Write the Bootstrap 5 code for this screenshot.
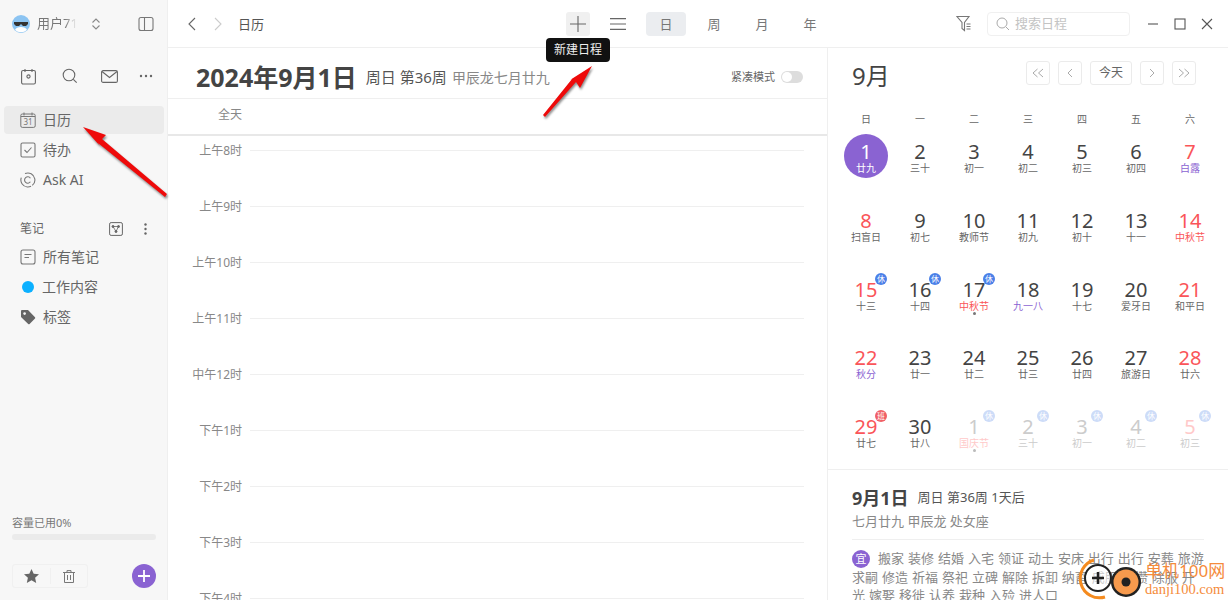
<!DOCTYPE html>
<html lang="zh-CN">
<head>
    <meta charset="UTF-8">
    <meta name="viewport" content="width=device-width, initial-scale=1.0">
    <title>日历</title>
    <link rel="stylesheet" href="https://cdn.jsdelivr.net/npm/bootstrap@5.3.0/dist/css/bootstrap.min.css">
    <style>
        html, body { height: 600px; overflow: hidden; }
        body { font-family: "Noto Sans", "Noto Sans CJK SC", sans-serif; color: #555; background: #fff; font-size: 13px; }
        svg { display: block; flex: none; }
        .shell { width: 1228px; height: 600px; position: relative; overflow: hidden; }

        /* sidebar */
        .side { width: 168px; flex: none; background: #f7f7f7; border-right: 1px solid #efefef; height: 600px; }
        .side-head { height: 47px; padding: 0 13px 0 12px; }
        .user-name { width: 40px; margin-left: 7px; white-space: nowrap; overflow: hidden; color: #777; font-size: 13px; -webkit-mask-image: linear-gradient(90deg, #000 70%, transparent); mask-image: linear-gradient(90deg, #000 70%, transparent); }
        .user-switch { margin-left: 13px; }
        .side-tools { height: 58px; padding-left: 21px; margin-bottom: 1px; }
        .side-tools svg:nth-child(2) { margin-left: 26px; }
        .side-tools svg:nth-child(3) { margin-left: 23px; }
        .side-tools svg:nth-child(4) { margin-left: 21px; }
        .side-item { height: 28px; margin: 0 3px 2px 4px; padding: 0 16px; border-radius: 4px; gap: 7px; font-size: 14px; color: #666; }
        .side-item span:not(.dot-blue) { margin-top: -2px; }
        .side-item.active { background: #ebebeb; }
        .side-label { height: 20px; margin: 23px 0 4px; padding: 0 20px 0 20px; font-size: 12px; color: #666; }
        .label-tools { gap: 21px; }
        .dot-blue { width: 12px; height: 12px; margin: 0 1px 0 2px; border-radius: 50%; background: #0bb0ff; flex: none; }
        .side-foot { padding: 0 11px 12px 12px; margin-top: auto; }
        .cap-text { font-size: 11px; color: #777; line-height: 16px; margin-bottom: 3px; }
        .cap-bar { height: 6px; border-radius: 3px; background: #ebebeb; margin-bottom: 24px; }
        .fav-box { width: 76px; height: 24px; border: 1px solid #f0f0f0; border-radius: 3px; }
        .fav-box > div { width: 37px; }
        .fav-box > div + div { border-left: 1px solid #f0f0f0; height: 16px; }
        .add-round { width: 24px; height: 24px; border-radius: 50%; background: #8a63d2; }

        /* top bar */
        .topbar { height: 48px; border-bottom: 1px solid #efefef; }
        .crumb { width: 398px; padding-left: 19px; font-size: 13px; color: #555; }
        .crumb span { margin-left: 15px; margin-top: 2px; }
        .crumb svg + svg { margin-left: 16px; }
        .plus-btn { width: 24px; height: 24px; border-radius: 3px; background: #f0f0f0; }
        .list-btn { width: 24px; height: 24px; margin: 0 16px 0 16px; }
        .view-tab { width: 40px; height: 24px; border-radius: 4px; margin-right: 8px; font-size: 13px; color: #777; text-align: center; line-height: 24px; }
        .view-tab.active { background: #ebedf0; }
        .search-box { width: 143px; height: 24px; border: 1px solid #f0f0f0; border-radius: 4px; padding-left: 8px; gap: 5px; color: #c4c4c4; font-size: 13px; margin: 0 16px 0 14px; }
        .win-btns { gap: 13px; padding-right: 14px; }

        /* day column */
        .day-col { width: 660px; flex: none; border-right: 1px solid #efefef; height: 552px; overflow: hidden; }
        .day-head { height: 51px; padding: 8px 24px 0 28px; border-bottom: 1px solid #efefef; }
        .day-title { font-size: 25px; font-weight: 700; color: #444; line-height: 32px; margin-right: 9px; }
        .day-sub { font-size: 15px; color: #555; margin-right: 5px; }
        .day-lunar { font-size: 14px; color: #888; }
        .compact { font-size: 11px; color: #666; gap: 6px; }
        .mini-switch { width: 22px; height: 12px; border-radius: 6px; background: #ddd; position: relative; }
        .mini-switch::after { content: ""; position: absolute; left: 1px; top: 1px; width: 10px; height: 10px; border-radius: 50%; background: #fff; }
        .all-day { height: 37px; border-bottom: 2px solid #e8e8e8; padding-right: 24px; color: #888; font-size: 12px; }
        .all-day span { width: 74px; text-align: right; margin-top: -4px; }
        .hour-list { padding-top: 7px; }
        .hour-row { height: 56px; gap: 8px; padding-right: 23px; align-items: flex-start; color: #888; font-size: 12px; line-height: 16px; }
        .hour-row span { width: 74px; text-align: right; flex: none; }
        .hour-row i { flex: 1; height: 1px; background: #efefef; margin-top: 7px; }

        /* right month panel */
        .month-col { width: 400px; flex: none; height: 552px; overflow: hidden; }
        .month-head { height: 57px; padding: 0 32px 0 24px; }
        .month-name { font-size: 24px; color: #444; line-height: 32px; margin-bottom: 2px; }
        .pager { height: 24px; min-width: 24px; border: 1px solid #ebebeb; border-radius: 3px; background: #fff; padding: 0; margin: 0 0 8px 8px; color: #666; font-size: 12px; line-height: 22px; }
        .pager.today { width: 42px; }
        .week-row, .date-grid { display: grid; grid-template-columns: repeat(7, 54px); padding-left: 11px; }
        .week-row { height: 22px; font-size: 10px; color: #666; text-align: center; line-height: 28px; }
        .date-grid { grid-auto-rows: 68.75px; height: 335px; margin-top: 7px; }
        .cell { position: relative; text-align: center; padding-top: 7px; margin: 0 5px; height: 44px; }
        .cell b { display: block; font-weight: 400; font-size: 20px; line-height: 21px; color: #444; }
        .cell small { display: block; font-size: 10px; line-height: 12px; color: #666; white-space: nowrap; }
        .cell.red b { color: #fa5559; }
        .cell.today-on { background: #8a63d2; border-radius: 50%; }
        .cell.today-on b, .cell.today-on small { color: #fff; }
        small.t-red { color: #fa5559 !important; }
        small.t-purple { color: #8a63d2 !important; }
        .cell.dim b, .cell.dim small { color: #ccc; }
        .cell.dim.red b { color: #ffc9c9; }
        .cell.dim small.t-red { color: #ffc9c9 !important; }
        .rest-tag { position: absolute; right: 1px; top: 1px; width: 12px; height: 12px; border-radius: 50%; background: #4a80e8; color: #fff; font-size: 8px; line-height: 12px; text-align: center; font-style: normal; }
        .rest-tag.work { background: #f06066; }
        .cell.dim .rest-tag { background: #cddcf8; }
        .event-dot { position: absolute; left: 20.5px; top: 40px; width: 3px; height: 3px; border-radius: 50%; background: #777; }
        .cell.dim .event-dot { background: #bbb; }
        .detail { border-top: 1px solid #efefef; padding: 16px 24px 0; height: 131px; }
        .detail-date { font-size: 18px; font-weight: 700; color: #444; line-height: 24px; margin-right: 9px; }
        .detail-sub { font-size: 13px; color: #555; }
        .detail-lunar { font-size: 13px; color: #888; line-height: 22px; padding-bottom: 7px; border-bottom: 1px solid #efefef; margin-bottom: 9px; }
        .yi-text { font-size: 13px; line-height: 18px; color: #888; margin: 0; word-spacing: .6px; }
        .yi-mark { display: inline-block; width: 18px; height: 18px; border-radius: 50%; background: #8a63d2; color: #fff; font-size: 11px; text-align: center; line-height: 18px; margin-right: 8px; }

        /* things laid over the page */
        .tip-new { position: absolute; left: 546px; top: 38px; width: 64px; height: 24px; border-radius: 4px; background: #111; color: #eee; font-size: 12px; text-align: center; line-height: 24px; }
        .arrows { position: absolute; left: 0; top: 0; pointer-events: none; }
        .arrows polygon { fill: #ee0a0a; filter: drop-shadow(1px 2px 1px rgba(0,0,0,.45)); }
        .mark-site { position: absolute; left: 1145px; top: 561px; color: #f58b3b; white-space: nowrap; }
        .mark-cn { font-size: 17px; line-height: 20px; }
        .mark-en { font-size: 14.5px; line-height: 17px; margin-top: 0; font-family: "Liberation Serif", serif; }
        .mark-logo { position: absolute; left: 1078px; top: 556px; }
    </style>
</head>
<body>
<div class="shell d-flex">
    <!-- Sidebar -->
    <aside class="side d-flex flex-column">
        <div class="side-head d-flex align-items-center">
            <svg width="18" height="18" viewBox="0 0 18 18"><circle cx="9" cy="9" r="9" fill="#8cc4f2"/><path d="M3 15c1-4 11-4 12 0a9 9 0 0 1-12 0z" fill="#fff"/><path d="M2 7h14v2l-2 2h-3L9 9l-2 2H4L2 9z" fill="#333"/></svg>
            <div class="user-name">用户71</div>
            <svg class="user-switch" width="12" height="16" viewBox="0 0 12 16" fill="none" stroke="#888" stroke-width="1.1"><path d="M2.500 6.500 6 3l3.500 3.500M2.500 9.500 6 13l3.500-3.500"/></svg>
            <svg class="ms-auto" width="16" height="16" viewBox="0 0 16 16" fill="none" stroke="#777" stroke-width="1.1"><rect x="1" y="1.500" width="14" height="13" rx="2"/><path d="M6.500 1.500v13"/></svg>
        </div>
        <div class="side-tools d-flex align-items-center">
            <svg width="15" height="17" viewBox="0 0 15 17" fill="none" stroke="#666" stroke-width="1.1"><rect x=".6" y="2.500" width="13.800" height="13.500" rx="1.500"/><path d="M4 1v3M11 1v3"/><circle cx="7.500" cy="8.500" r="1.600"/></svg>
            <svg width="16" height="16" viewBox="0 0 16 16" fill="none" stroke="#666" stroke-width="1.1"><circle cx="7" cy="7" r="5.800"/><path d="m11.300 11.300 3.400 3.400"/></svg>
            <svg width="17" height="13" viewBox="0 0 17 13" fill="none" stroke="#666" stroke-width="1.1"><rect x=".6" y=".6" width="15.800" height="11.800" rx="1.500"/><path d="m1 1.500 7.500 6 7.500-6"/></svg>
            <svg width="14" height="4" viewBox="0 0 14 4" fill="#666"><circle cx="2" cy="2" r="1.200"/><circle cx="7" cy="2" r="1.200"/><circle cx="12" cy="2" r="1.200"/></svg>
        </div>
        <div class="side-item active d-flex align-items-center">
            <svg width="16" height="16" viewBox="0 0 16 16" fill="none" stroke="#777" stroke-width="1"><rect x=".8" y="2" width="14.400" height="13.400" rx="1.500"/><path d="M4 .5v3M12 .5v3M1 4.500h14"/><text x="8" y="13" font-size="8" fill="#777" stroke="none" text-anchor="middle">31</text></svg>
            <span>日历</span>
        </div>
        <div class="side-item d-flex align-items-center">
            <svg width="16" height="16" viewBox="0 0 16 16" fill="none" stroke="#777" stroke-width="1.1"><rect x="1" y="1" width="14" height="14" rx="1.500"/><path d="m4.500 8 2.500 2.500 4.500-5"/></svg>
            <span>待办</span>
        </div>
        <div class="side-item d-flex align-items-center">
            <svg width="16" height="16" viewBox="0 0 16 16" fill="none" stroke="#777" stroke-width="1.1"><path d="M5 1.600a7 7 0 1 1-3.700 4" stroke-dasharray="20 1.500"/><path d="M10.400 6.200a3.200 3.200 0 1 0 0 3.600"/></svg>
            <span>Ask AI</span>
        </div>
        <div class="side-label d-flex align-items-center justify-content-between">
            <span>笔记</span>
            <span class="label-tools d-flex align-items-center">
                <svg width="14" height="14" viewBox="0 0 14 14" fill="none" stroke="#666" stroke-width="1"><rect x=".6" y=".6" width="12.800" height="12.800" rx="1.500"/><path d="m4 4.500 5.500 0L7 9.500z" stroke-width=".8"/><circle cx="4" cy="4.500" r="1" fill="#666"/><circle cx="9.500" cy="4.500" r="1" fill="#666"/><circle cx="7" cy="9.500" r="1" fill="#666"/></svg>
                <svg width="3" height="12" viewBox="0 0 3 12" fill="#666"><circle cx="1.500" cy="1.500" r="1.200"/><circle cx="1.500" cy="6" r="1.200"/><circle cx="1.500" cy="10.500" r="1.200"/></svg>
            </span>
        </div>
        <div class="side-item d-flex align-items-center">
            <svg width="16" height="16" viewBox="0 0 16 16" fill="none" stroke="#777" stroke-width="1.1"><rect x="1" y="1" width="14" height="14" rx="2"/><path d="M4.500 5.500h7M4.500 8.500h4.500"/></svg>
            <span>所有笔记</span>
        </div>
        <div class="side-item d-flex align-items-center">
            <span class="dot-blue"></span>
            <span>工作内容</span>
        </div>
        <div class="side-item d-flex align-items-center">
            <svg width="16" height="16" viewBox="0 0 16 16"><path d="M1 2.200C1 1.500 1.500 1 2.200 1H8l7 7.200a1 1 0 0 1 0 1.300l-5.400 5.400a1 1 0 0 1-1.400 0L1 8z" fill="#666"/><circle cx="4.600" cy="4.600" r="1.300" fill="#f7f7f7"/></svg>
            <span>标签</span>
        </div>
        <div class="side-foot">
            <div class="cap-text">容量已用0%</div>
            <div class="cap-bar"></div>
            <div class="d-flex align-items-center justify-content-between">
                <div class="fav-box d-flex align-items-center">
                    <div class="d-flex justify-content-center">
                        <svg width="15" height="14" viewBox="0 0 15 14" fill="#666"><path d="m7.500 0 2.200 4.700 5.300.6-3.900 3.500 1.100 5.200-4.700-2.700L2.800 14l1.100-5.200L0 5.300l5.300-.6z"/></svg>
                    </div>
                    <div class="d-flex justify-content-center align-items-center">
                        <svg width="12" height="13" viewBox="0 0 12 13" fill="none" stroke="#777"><path d="M0 2.500h12M4 2.500V.6h4v1.900M1.500 2.500v10h9v-10M4.500 5v5M7.500 5v5"/></svg>
                    </div>
                </div>
                <div class="add-round d-flex align-items-center justify-content-center">
                    <svg width="12" height="12" viewBox="0 0 12 12" stroke="#fff" stroke-width="1.800"><path d="M6 0v12M0 6h12"/></svg>
                </div>
            </div>
        </div>
    </aside>

    <div class="flex-grow-1 d-flex flex-column">
        <!-- Top bar -->
        <header class="topbar d-flex align-items-center">
            <div class="crumb d-flex align-items-center">
                <svg width="10" height="14" viewBox="0 0 10 14" fill="none" stroke="#666" stroke-width="1.1"><path d="M8 1 2 7l6 6"/></svg>
                <svg width="10" height="14" viewBox="0 0 10 14" fill="none" stroke="#ccc" stroke-width="1.1"><path d="m2 1 6 6-6 6"/></svg>
                <span>日历</span>
            </div>
            <div class="plus-btn d-flex align-items-center justify-content-center">
                <svg width="16" height="16" viewBox="0 0 16 16" stroke="#666" stroke-width="1.1"><path d="M8 0v16M0 8h16"/></svg>
            </div>
            <div class="list-btn d-flex align-items-center justify-content-center">
                <svg width="16" height="12" viewBox="0 0 16 12" stroke="#666" stroke-width="1.1"><path d="M0 .6h16M0 6h16M0 11.400h16"/></svg>
            </div>
            <div class="view-tab active">日</div>
            <div class="view-tab">周</div>
            <div class="view-tab">月</div>
            <div class="view-tab">年</div>
            <svg class="ms-auto" width="17" height="17" viewBox="0 0 17 17" fill="none" stroke="#777" stroke-width="1.1"><path d="M1 1.500h12L8.500 7.500v8L6 13.500v-6zM10.500 9h4M10.500 11.500h4M10.500 14h4"/></svg>
            <div class="search-box d-flex align-items-center">
                <svg width="14" height="14" viewBox="0 0 14 14" fill="none" stroke="#aaa"><circle cx="6" cy="6" r="5"/><path d="m10 10 3 3"/></svg>
                <span>搜索日程</span>
            </div>
            <div class="win-btns d-flex align-items-center">
                <svg width="14" height="14" viewBox="0 0 14 14" stroke="#555" stroke-width="1.1"><path d="M2 7h10"/></svg>
                <svg width="14" height="14" viewBox="0 0 14 14" fill="none" stroke="#555" stroke-width="1.1"><rect x="2" y="2" width="10" height="10"/></svg>
                <svg width="14" height="14" viewBox="0 0 14 14" stroke="#555" stroke-width="1.1"><path d="m2 2 10 10M12 2 2 12"/></svg>
            </div>
        </header>

        <div class="d-flex">
            <!-- Day view -->
            <section class="day-col">
                <div class="day-head d-flex align-items-center">
                    <span class="day-title">2024年9月1日</span>
                    <span class="day-sub">周日 第36周</span>
                    <span class="day-lunar">甲辰龙七月廿九</span>
                    <span class="compact ms-auto d-flex align-items-center">紧凑模式 <span class="mini-switch"></span></span>
                </div>
                <div class="all-day d-flex align-items-center"><span>全天</span></div>
                <div class="hour-list" id="hour-list"></div>
            </section>

            <!-- Month panel -->
            <section class="month-col">
                <div class="month-head d-flex align-items-center">
                    <span class="month-name me-auto">9月</span>
                    <button class="pager d-flex align-items-center justify-content-center"><svg width="14" height="10" viewBox="0 0 14 10" fill="none" stroke="#aaa"><path d="M6.500 1 2 5l4.500 4M12 1 7.500 5l4.500 4"/></svg></button>
                    <button class="pager d-flex align-items-center justify-content-center"><svg width="8" height="10" viewBox="0 0 8 10" fill="none" stroke="#aaa"><path d="M6 1 2 5l4 4"/></svg></button>
                    <button class="pager today">今天</button>
                    <button class="pager d-flex align-items-center justify-content-center"><svg width="8" height="10" viewBox="0 0 8 10" fill="none" stroke="#aaa"><path d="m2 1 4 4-4 4"/></svg></button>
                    <button class="pager d-flex align-items-center justify-content-center"><svg width="14" height="10" viewBox="0 0 14 10" fill="none" stroke="#aaa"><path d="M2 1l4.500 4L2 9M7.500 1 12 5l-4.500 4"/></svg></button>
                </div>
                <div class="week-row">
                    <span>日</span><span>一</span><span>二</span><span>三</span><span>四</span><span>五</span><span>六</span>
                </div>
                <div class="date-grid" id="date-grid"></div>
                <div class="detail">
                    <div class="d-flex align-items-center">
                        <span class="detail-date">9月1日</span>
                        <span class="detail-sub">周日 第36周 1天后</span>
                    </div>
                    <div class="detail-lunar">七月廿九 甲辰龙 处女座</div>
                    <p class="yi-text"><span class="yi-mark">宜</span>搬家 装修 结婚 入宅 领证 动土 安床 出行 出行 安葬 旅游 求嗣 修造 祈福 祭祀 立碑 解除 拆卸 纳畜 成服 启攒 除服 开光 嫁娶 移徙 认养 栽种 入殓 进人口</p>
                </div>
            </section>
        </div>
    </div>

    <!-- Tooltip -->
    <div class="tip-new">新建日程</div>

    <!-- Red annotation arrows -->
    <svg class="arrows" width="1228" height="600" viewBox="0 0 1228 600">
        <polygon points="83,127 106,135 102,139 167,194 165,197 98,143 100,146"/>
        <polygon points="592,66 580,88 576,82 545,117 543,115 572,79 570,80"/>
    </svg>

    <!-- Site watermark -->
    <svg class="mark-logo" width="66" height="44" viewBox="0 0 66 44">
        <path d="M16 4A19 19 0 0 0 27 41" fill="none" stroke="#f58b1f" stroke-width="3"/>
        <circle cx="20" cy="22" r="13" fill="#fff" fill-opacity=".6" stroke="#222" stroke-width="2"/>
        <path d="M20 16v12M14 22h12" stroke="#222" stroke-width="2.500"/>
        <circle cx="48" cy="26" r="15" fill="#222"/>
        <circle cx="48" cy="26" r="12.500" fill="#f79a4d"/>
        <circle cx="48" cy="26" r="4.500" fill="#222"/>
    </svg>
    <div class="mark-site">
        <div class="mark-cn">单机100网</div>
        <div class="mark-en">danji100.com</div>
    </div>
</div>

<script src="https://cdn.jsdelivr.net/npm/bootstrap@5.3.0/dist/js/bootstrap.bundle.min.js"></script>
<script>
    // Hour rows of the day view
    const hours = ['上午8时', '上午9时', '上午10时', '上午11时', '中午12时', '下午1时', '下午2时', '下午3时', '下午4时'];
    document.getElementById('hour-list').innerHTML = hours
        .map(h => `<div class="hour-row d-flex"><span>${h}</span><i></i></div>`).join('');

    // Month grid: [day, lunar, flags] flags: r red day, tr red text, tp purple text, d dim, x rest tag, w work tag, e event dot, n today
    const days = [
        [1, '廿九', 'n'], [2, '三十'], [3, '初一'], [4, '初二'], [5, '初三'], [6, '初四'], [7, '白露', 'r tp'],
        [8, '扫盲日', 'r'], [9, '初七'], [10, '教师节'], [11, '初九'], [12, '初十'], [13, '十一'], [14, '中秋节', 'r tr'],
        [15, '十三', 'r x'], [16, '十四', 'x'], [17, '中秋节', 'tr x e'], [18, '九一八', 'tp'], [19, '十七'], [20, '爱牙日'], [21, '和平日', 'r'],
        [22, '秋分', 'r tp'], [23, '廿一'], [24, '廿二'], [25, '廿三'], [26, '廿四'], [27, '旅游日'], [28, '廿六', 'r'],
        [29, '廿七', 'r w'], [30, '廿八'], [1, '国庆节', 'd tr x e'], [2, '三十', 'd x'], [3, '初一', 'd x'], [4, '初二', 'd x'], [5, '初三', 'd r x']
    ];
    document.getElementById('date-grid').innerHTML = days.map(([num, lunar, flags = '']) => {
        const f = flags.split(' ');
        const cls = ['cell'];
        if (f.includes('r')) cls.push('red');
        if (f.includes('d')) cls.push('dim');
        if (f.includes('n')) cls.push('today-on');
        const txt = f.includes('tr') ? 't-red' : f.includes('tp') ? 't-purple' : '';
        let extra = '';
        if (f.includes('x')) extra += '<i class="rest-tag">休</i>';
        if (f.includes('w')) extra += '<i class="rest-tag work">班</i>';
        if (f.includes('e')) extra += '<span class="event-dot"></span>';
        return `<div class="${cls.join(' ')}"><b>${num}</b><small class="${txt}">${lunar}</small>${extra}</div>`;
    }).join('');
</script>
</body>
</html>
